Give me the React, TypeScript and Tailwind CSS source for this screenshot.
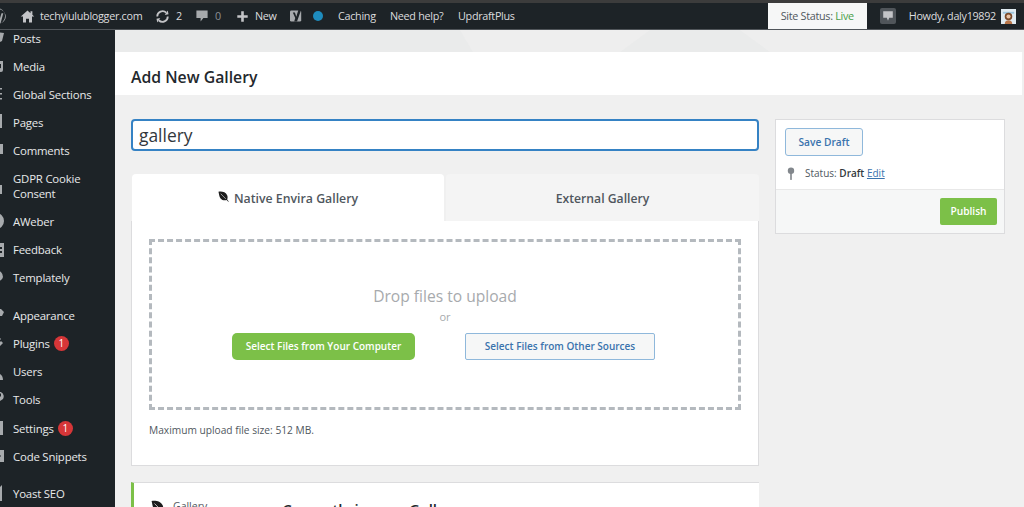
import React from "react";

function Leaf({ className = "" }: { className?: string }) {
  return (
    <svg viewBox="0 0 12 12" className={className}>
      <path d="M0.5 0.8C4 0.2 8.5 1 10 4.5C10.8 6.4 10.4 8 10 9.2L11.8 11.4L11.2 11.8L9.3 9.8C7.4 10.6 4.4 10.2 2.8 8.2C1.2 6.2 1.2 3 0.5 0.8Z" fill="#1d1d1d" />
      <path d="M3 3L8.5 8.6" stroke="#fff" strokeWidth="0.6" />
    </svg>
  );
}

function Icon({ d }: { d: string }) {
  return (
    <svg viewBox="0 0 20 20" className="w-[20px] h-[20px] shrink-0 ml-[-14px] mr-[7px]" fill="#a7aaad">
      <path d={d} />
    </svg>
  );
}

const icons: Record<string, string> = {
  posts: "M3 10l7-6 8 1-2 8-6 3-2-2-4 4-1-1 4-4z",
  media: "M3 4h9v3h-2v9H8l-2-2 1-1V7H3zM14 5h3v9a2 2 0 1 1-2-2V8h-1z",
  list: "M4 4h12v1.6H4zM4 9h12v1.6H4zM4 14h12v1.6H4z",
  page: "M5 2h11v14H5zM3 5h1v13h10v1H3z",
  comment: "M4 3h13v10h-5l-4 4v-4H4z",
  lock: "M10 2a4 4 0 0 1 4 4v3h2v9H4V9h2V6a4 4 0 0 1 4-4zm-2 7h4V6a2 2 0 0 0-4 0z",
  circle: "M10 2a8 8 0 1 1 0 16a8 8 0 0 1 0-16zm0 5a3 3 0 1 0 0 6a3 3 0 0 0 0-6z",
  feedback: "M2 3h16v14H2zM10 7v2h6V7zM10 11v2h6v-2z",
  temp: "M10 2a7 7 0 0 1 7 7a5 5 0 0 1-5 4H7a5 5 0 0 1-4-5a7 7 0 0 1 7-6zM8 15h4v4H8z",
  brush: "M2 5l13-1 3 3-2 4H9l-2-2-4 1z",
  plug: "M6 2l2 2-2 3 3 3 3-2 2 2-3 4-4 1-2 3-2-2 2-3 1-4-3-2zM13 3l2 2-3 3-2-2zM15 7l2 2-3 3-2-2z",
  user: "M10 2a4 4 0 1 1 0 8a4 4 0 0 1 0-8zM3 18c0-5 3-7 7-7s7 2 7 7z",
  tool: "M15 2a5 5 0 0 1 2 7l-3 2-6 6-3-1-1-3 6-6 0-3 3-2 3 0-3 3 2 2z",
  settings: "M3 3h14v14H3zM9 6v9h2V6zM7 8h6v2H7z",
  code: "M2 4h16v12H2zM8 7l-3 3 3 3 1-1-2-2 2-2zM12 7l-1 1 2 2-2 2 1 1 3-3z",
  yoast: "M3 6h9l4-4v16H3z",
};

function MenuItem({ label, icon, badge, h = "h-[28.2px]", two }: { label: string; icon: string; badge?: boolean; h?: string; two?: string }) {
  return (
    <div className={`flex items-center ${h} shrink-0 text-[11.4px] tracking-[-0.2px] leading-[15px] text-[#e8e9ea]`}>
      <Icon d={icons[icon]} />
      <span>
        {label}
        {two && <><br />{two}</>}
      </span>
      {badge && (
        <span className="ml-[4px] w-[15px] h-[15px] rounded-full bg-[#d63638] text-white text-[10px] leading-[15px] text-center">1</span>
      )}
    </div>
  );
}

function Sidebar() {
  return (
    <aside className="w-[115px] shrink-0 bg-[#1d2327] flex flex-col overflow-hidden">
      <MenuItem label="Posts" icon="posts" h="h-[16px] mb-[6px]" />
      <MenuItem label="Media" icon="media" />
      <MenuItem label="Global Sections" icon="list" />
      <MenuItem label="Pages" icon="page" />
      <MenuItem label="Comments" icon="comment" />
      <MenuItem label="GDPR Cookie" two="Consent" icon="lock" h="h-[42.5px]" />
      <MenuItem label="AWeber" icon="circle" />
      <MenuItem label="Feedback" icon="feedback" />
      <MenuItem label="Templately" icon="temp" />
      <div className="h-[9.5px] shrink-0" />
      <MenuItem label="Appearance" icon="brush" />
      <MenuItem label="Plugins" icon="plug" badge />
      <MenuItem label="Users" icon="user" />
      <MenuItem label="Tools" icon="tool" />
      <MenuItem label="Settings" icon="settings" badge />
      <MenuItem label="Code Snippets" icon="code" />
      <div className="h-[8.5px] shrink-0" />
      <MenuItem label="Yoast SEO" icon="yoast" />
    </aside>
  );
}

function TopBar() {
  return (
    <div className="h-[30px] shrink-0 border-t-[3px] border-b border-t-[#3c3c3c] border-b-[#50555a] bg-[#1d2327] flex items-center text-[10.8px] tracking-[-0.3px] text-[#dcdcde] whitespace-nowrap">
      <svg viewBox="0 0 20 20" className="w-[18px] h-[18px] ml-[-12px] mr-[14px]" fill="#a7aaad">
        <path d="M10 1a9 9 0 1 1 0 18a9 9 0 0 1 0-18zm0 2a7 7 0 0 0-6.5 9.5L7 6h2L6 15l2 2 2-6 2 6 3-10h2l-3 11a7 7 0 0 0-4-15z" />
      </svg>
      <svg viewBox="0 0 20 20" className="w-[15px] h-[15px] mr-[5px]" fill="#c3c4c7">
        <path d="M10 2l4 3.5V3h2.5v4.7L19 10h-3v8h-4v-5H8v5H4v-8H1z" />
      </svg>
      <span className="w-[115px] shrink-0">techylulublogger.com</span>
      <svg viewBox="0 0 20 20" className="w-[15px] h-[15px] mr-[6px]" fill="none" stroke="#c3c4c7" strokeWidth="2.4">
        <path d="M3 10a7 7 0 0 1 12-5M17 10a7 7 0 0 1-12 5" />
        <path d="M13 8l5-1-1-5zM7 12l-5 1 1 5z" fill="#c3c4c7" stroke="none" />
      </svg>
      <span className="w-[19px] shrink-0">2</span>
      <svg viewBox="0 0 20 20" className="w-[14px] h-[14px] mr-[6px]" fill="#a7aaad">
        <path d="M2 2h16v11h-6l-4 5v-5H2z" />
      </svg>
      <span className="w-[21px] shrink-0 text-[#8c8f94]">0</span>
      <svg viewBox="0 0 20 20" className="w-[13px] h-[13px] mr-[6px]" fill="#c3c4c7">
        <path d="M8 2h4v6h6v4h-6v6H8v-6H2V8h6z" />
      </svg>
      <span className="w-[35px] shrink-0">New</span>
      <svg viewBox="0 0 20 20" className="w-[14px] h-[14px] mr-[9px]">
        <rect x="0" y="2" width="16" height="16" rx="2" fill="#a7aaad" />
        <path d="M4 5h3l2 6 3-10h4l-6 17H6l1.5-5z" fill="#1d2327" />
      </svg>
      <span className="w-[10px] h-[10px] rounded-full bg-[#1e8cbe] mr-[15px]" />
      <span className="w-[52px] shrink-0">Caching</span>
      <span className="w-[68px] shrink-0">Need help?</span>
      <span>UpdraftPlus</span>
      <div className="ml-auto w-[99px] h-full bg-[#f6f7f7] text-[#50575e] flex items-center justify-center">
        <span>Site Status: <span className="text-[#46a049]">Live</span></span>
      </div>
      <div className="w-[16px] h-[16px] ml-[13px] mr-[13px] rounded-[2px] bg-[#50555a] flex items-center justify-center">
        <svg viewBox="0 0 20 20" className="w-[12px] h-[12px]" fill="#c3c4c7"><path d="M2 2h16v11h-6l-2 5-2-5H2z" /></svg>
      </div>
      <span className="mr-[5px]">Howdy, daly19892</span>
      <svg viewBox="0 0 16 16" className="w-[15px] h-[15px] mr-[8px]">
        <rect width="16" height="16" fill="#dfeaf0" />
        <path d="M2 3h12v2H2z" fill="#9cc4dc" />
        <circle cx="8" cy="8" r="4" fill="#7a4a2a" />
        <circle cx="8" cy="8" r="2.2" fill="#e9c3a4" />
        <path d="M4 16c0-3 2-4 4-4s4 1 4 4z" fill="#b9764a" />
      </svg>
    </div>
  );
}

function Main() {
  return (
    <main className="flex-1 min-w-0 bg-[#f0f0f0] overflow-hidden flex flex-col">
      <svg viewBox="0 0 909 22" className="h-[22px] w-[909px] shrink-0 bg-[#eaebeb]">
        <path d="M345 0H909V22H655L625 0H535L505 22H358Z" fill="#eeeeee" />
      </svg>
      <div className="h-[43px] shrink-0 bg-white mr-[2px] flex items-center pl-[16px] pt-[8px] text-[15.8px] font-semibold text-[#23282d]">
        Add New Gallery
      </div>
      <div className="flex items-start pl-[16px] pt-[24px]">
        <div className="w-[628px] shrink-0">
          <div className="h-[32px] rounded-[4px] border-2 border-[#3582c4] bg-white text-[#32373c] text-[17.4px] leading-[29px] pl-[6px]">
            gallery
          </div>
          <div className="flex mt-[23px] h-[47px]">
            <div className="w-[312px] ml-[1px] pt-[3px] bg-white rounded-t-[4px] flex items-center justify-center gap-[5px] text-[12.3px] font-semibold text-[#50575e]">
              <Leaf className="w-[11px] h-[11px] mb-[5px]" />
              Native Envira Gallery
            </div>
            <div className="flex-1 ml-[2px] pt-[3px] bg-[#f4f4f4] rounded-t-[4px] flex items-center justify-center text-[12.2px] font-semibold text-[#50575e]">
              External Gallery
            </div>
          </div>
          <div className="bg-white border border-[#dcdcde] border-t-0 h-[245px] px-[17px] pt-[18px]">
            <div className="h-[171px] border-[3px] border-dashed border-[#b4b9be] flex flex-col items-center pt-[44px]">
              <div className="text-[15.6px] leading-[20px] text-[#a7aaad]">Drop files to upload</div>
              <div className="text-[11px] leading-[14px] mt-[4px] text-[#a7aaad]">or</div>
              <div className="flex gap-[50px] mt-[9px] ml-[-3px]">
                <div className="w-[183px] h-[27px] rounded-[5px] bg-[#7cc048] text-white text-[10px] font-semibold flex items-center justify-center">
                  Select Files from Your Computer
                </div>
                <div className="w-[190px] h-[27px] rounded-[2px] border border-[#8fb8db] bg-[#f6f7f7] text-[#3a73ad] text-[10px] font-semibold flex items-center justify-center">
                  Select Files from Other Sources
                </div>
              </div>
            </div>
            <p className="mt-[13px] text-[10.2px] leading-[14px] text-[#50575e]">Maximum upload file size: 512 MB.</p>
          </div>
          <div className="mt-[16px] h-[60px] bg-white border-t border-[#dcdcde] border-l-[3px] border-l-[#7cc048] flex items-start">
            <Leaf className="w-[14px] h-[14px] ml-[17px] mt-[17px]" />
            <span className="text-[10.5px] text-[#50575e] ml-[8px] mt-[16px] leading-[14px]">Gallery</span>
            <span className="text-[15px] font-semibold text-[#23282d] ml-[75px] mt-[16px] leading-[20px]">Currently in your Gallery</span>
          </div>
        </div>
        <div className="w-[230px] shrink-0 ml-[16px] border border-[#dcdcde] bg-white">
          <div className="px-[9px] pt-[8px] h-[69px]">
            <div className="w-[78px] h-[28px] pt-[1px] rounded-[3px] border border-[#8fb8db] bg-[#f6f7f7] text-[#3a73ad] text-[10.2px] font-semibold flex items-center justify-center">
              Save Draft
            </div>
            <div className="flex items-center mt-[10px] text-[10px] leading-[14px] text-[#50575e]">
              <svg viewBox="0 0 10 16" className="w-[8px] h-[13px] ml-[2px] mr-[10px]" fill="#82878c">
                <circle cx="5" cy="4.5" r="4" />
                <rect x="4" y="7" width="2" height="9" />
              </svg>
              <span>Status: <b className="font-semibold text-[#32373c]">Draft</b> <span className="text-[#3a73ad] underline">Edit</span></span>
            </div>
          </div>
          <div className="h-[44px] bg-[#f6f7f7] border-t border-[#e8e8e8] flex items-center justify-end pr-[7px]">
            <div className="w-[57px] h-[27px] rounded-[2px] bg-[#7cc048] text-white text-[10.2px] font-semibold flex items-center justify-center">
              Publish
            </div>
          </div>
        </div>
      </div>
    </main>
  );
}

export default function App() {
  return (
    <div className="w-[1024px] h-[507px] flex flex-col overflow-hidden font-['Open_Sans',sans-serif] antialiased">
      <TopBar />
      <div className="flex flex-1 min-h-0">
        <Sidebar />
        <Main />
      </div>
    </div>
  );
}
